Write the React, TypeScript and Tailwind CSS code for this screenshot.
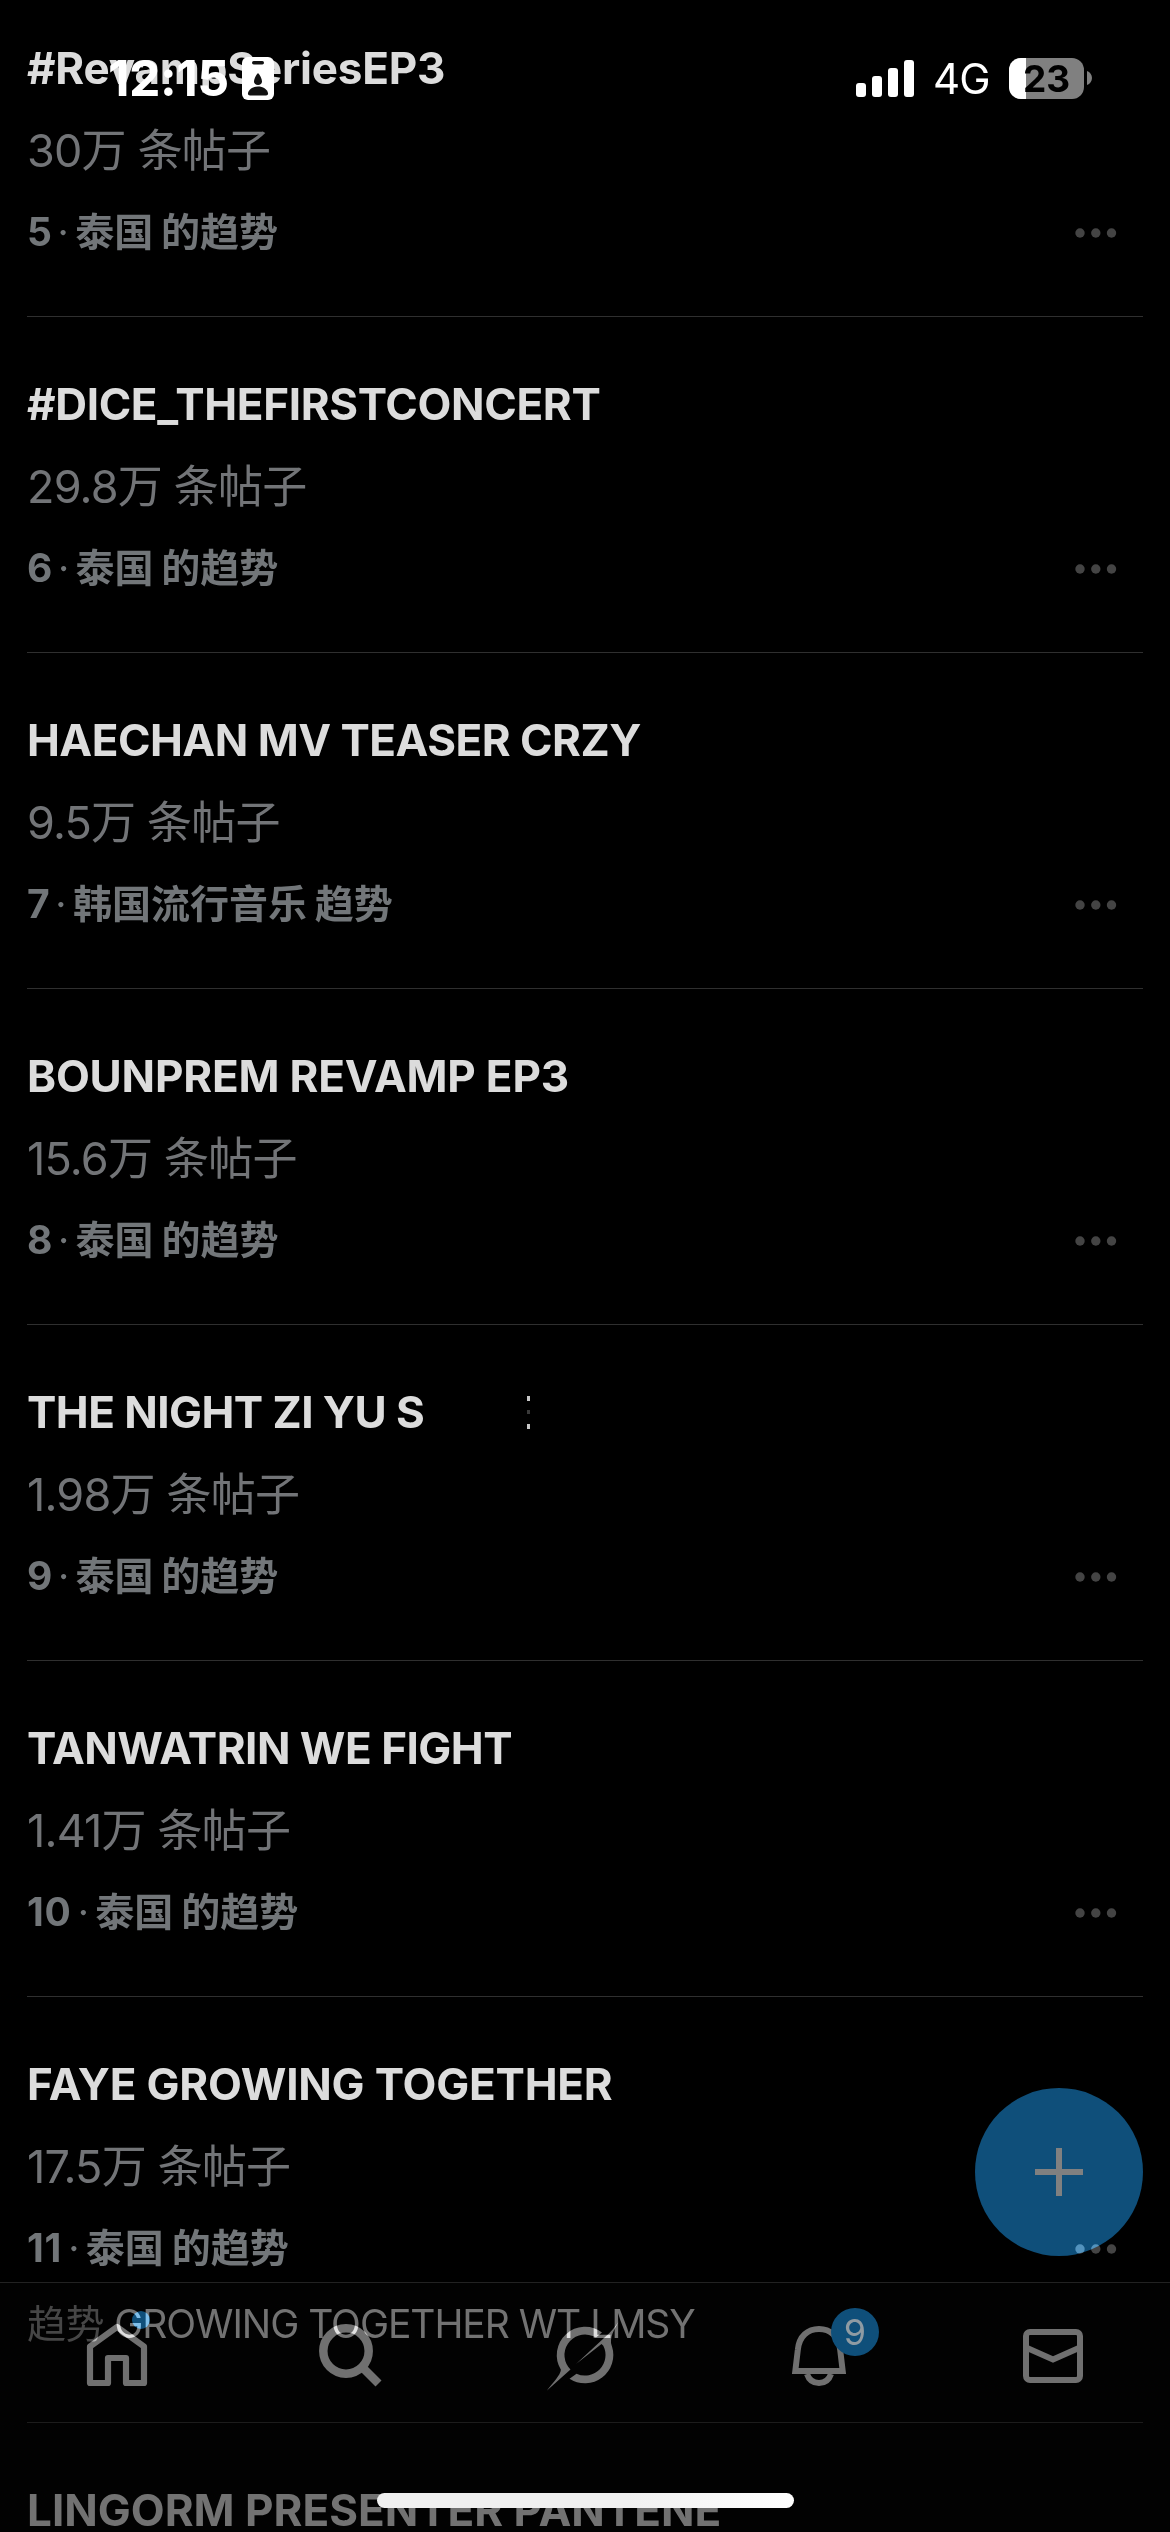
import { clsx } from "clsx";

interface Trend {
  title: string;
  tracking: string;
  posts: string;
  rank: number;
  topic: string;
}

const trends: Trend[] = [
  { title: "#RevampSeriesEP3", tracking: "tracking-[-0.2px]", posts: "30万 条帖子", rank: 5, topic: "泰国 的趋势" },
  { title: "#DICE_THEFIRSTCONCERT", tracking: "tracking-[-0.35px]", posts: "29.8万 条帖子", rank: 6, topic: "泰国 的趋势" },
  { title: "HAECHAN MV TEASER CRZY", tracking: "tracking-[-0.5px]", posts: "9.5万 条帖子", rank: 7, topic: "韩国流行音乐 趋势" },
  { title: "BOUNPREM REVAMP EP3", tracking: "tracking-[-0.2px]", posts: "15.6万 条帖子", rank: 8, topic: "泰国 的趋势" },
  { title: "THE NIGHT ZI YU S", tracking: "tracking-[-0.55px]", posts: "1.98万 条帖子", rank: 9, topic: "泰国 的趋势" },
  { title: "TANWATRIN WE FIGHT", tracking: "tracking-[-0.5px]", posts: "1.41万 条帖子", rank: 10, topic: "泰国 的趋势" },
  { title: "FAYE GROWING TOGETHER", tracking: "tracking-[-0.2px]", posts: "17.5万 条帖子", rank: 11, topic: "泰国 的趋势" },
];

const MoreDots = () => (
  <svg className="mt-[2px] h-[10px] w-[42px]" viewBox="0 0 42 10" fill="#444444">
    <circle cx="5" cy="5" r="4.7" />
    <circle cx="20.800" cy="5" r="4.7" />
    <circle cx="36.500" cy="5" r="4.7" />
  </svg>
);

const TrendRow = ({ trend, last = false }: { trend: Trend; last?: boolean }) => (
  <div
    className={clsx(
      "border-b pt-[61px]",
      last ? "h-[426px] border-[#1a1a1a]" : "h-[336px] border-[#2f2f2f]"
    )}
  >
    <div className="flex h-[52px] items-center">
      <span className={clsx("text-[44px] font-bold text-[#dcdcdc]", trend.tracking)}>{trend.title}</span>
      {trend.rank === 9 && (
        <span className="ml-[103px] flex h-[33px] w-[3px] flex-col justify-between">
          <i className="h-[5px] bg-[#c8c8c8]" />
          <i className="h-[4px] bg-[#3a3a3a]" />
          <i className="h-[5px] bg-[#c8c8c8]" />
        </span>
      )}
    </div>
    <div className="mt-[30px] flex h-[54px] items-center text-[45px] font-normal tracking-[-0.8px] text-[#727477]">
      {trend.posts}
    </div>
    <div className="mt-[27px] flex h-[54px] items-center justify-between pr-[26px] text-[39px] text-[#727679]">
      <div className="flex items-center">
        <span className={clsx("font-bold", trend.rank > 9 ? "tracking-[0.6px]" : "tracking-[-0.8px]")}>
          {trend.rank}
        </span>
        <span className="w-[24px] text-center">·</span>
        <span className="font-semibold [word-spacing:-2px]">{trend.topic}</span>
      </div>
      <MoreDots />
    </div>
    {last && (
      <div className="mt-[22px] flex h-[54px] items-center whitespace-pre text-[39px] text-[#707070]">
        <span className="tracking-[-0.6px] text-[#444444]">趋势 </span>
        <span className="tracking-[-1.05px]">GROWING TOGETHER WT LMSY</span>
      </div>
    )}
  </div>
);

const StatusBar = () => (
  <header className="absolute inset-x-0 top-0 flex h-[150px] items-start justify-between pl-[108px] pr-[78px] pt-[54px]">
    <div className="flex items-center">
      <span className="w-[134px] text-[50px] font-bold leading-[48px] tracking-[-0.5px] text-white">12:15</span>
      <svg className="h-[43px] w-[32px]" viewBox="0 0 32 43">
        <rect width="32" height="43" rx="6" fill="#fff" />
        <rect x="10" y="4" width="12" height="3.500" rx="1.700" fill="#111" />
        <path d="M16 16c2 2 4 6 4 8.500 0 2-1.700 3.500-4 3.500s-4-1.500-4-3.500c0-2.500 2-6.500 4-8.500z" fill="#111" />
        <path d="M6 36c1-4 5-6.500 10-6.500s9 2.500 10 6.500c.3 1.500-.5 2.500-2 2.500H8c-1.500 0-2.300-1-2-2.500z" fill="#111" />
      </svg>
    </div>
    <div className="flex items-center pt-[3px]">
      <svg className="mt-px h-[38px] w-[58px]" viewBox="0 0 58 38" fill="#fff">
        <rect x="0" y="23" width="10" height="14" rx="3" />
        <rect x="16" y="16" width="10" height="21" rx="3" />
        <rect x="32" y="8" width="10" height="29" rx="3" />
        <rect x="48" y="0" width="10" height="37" rx="3" />
      </svg>
      <span className="ml-[19px] mt-[2px] w-[58px] text-[42px] leading-[40px] tracking-[-1px] text-white">4G</span>
      <div className="relative ml-[18px] flex h-[41px] w-[75px] items-center justify-center overflow-hidden rounded-[12px] bg-[#808080]">
        <div className="absolute inset-y-0 left-0 w-[17px] bg-white" />
        <span className="relative text-[37px] font-bold leading-[41px] text-black">23</span>
      </div>
      <svg className="ml-[3px] h-[14px] w-[5px]" viewBox="0 0 5 14">
        <path d="M0 0c3 1 5 4 5 7s-2 6-5 7z" fill="#808080" />
      </svg>
    </div>
  </header>
);

const ComposeButton = () => (
  <button className="absolute left-[975px] top-[2088px] flex size-[168px] items-center justify-center rounded-full bg-[#0f4f7a] mix-blend-plus-lighter">
    <svg className="size-[48px]" viewBox="0 0 48 48">
      <path d="M21 0h6v21h21v6H27v21h-6V27H0v-6h21z" fill="#808080" />
    </svg>
  </button>
);

const TabBar = () => (
  <nav className="absolute inset-x-0 bottom-0 h-[250px] border-t border-[#222222] bg-[#020202] mix-blend-plus-lighter">
    <div className="grid h-[146px] grid-cols-5 place-items-center">
      <div className="relative size-[78px]">
        <svg className="size-full" viewBox="0 0 78 78" fill="none" stroke="#707070" strokeWidth="6.200">
          <path d="M12 66V29.500L39 10l27 19.500V66H48V41H30v25z" strokeLinejoin="round" />
        </svg>
        <div className="absolute left-[54px] top-[-6px] size-[18px] rounded-full bg-[#0f4f7a]" />
      </div>
      <svg className="size-[78px]" viewBox="0 0 78 78" fill="none" stroke="#707070" strokeWidth="8.500">
        <circle cx="34" cy="34" r="22.700" />
        <path d="M50 50l16.500 16.500" />
      </svg>
      <svg className="size-[78px]" viewBox="0 0 78 78" fill="#707070">
        <path d="M56 15.400A28.300 28.300 0 0 0 14.900 52.800C14.500 58 7 66 .7 73.700L24.500 52.500A20.500 20.500 0 0 1 46.700 19L50 20.500z" />
        <path d="M30 47L58 21C64 16 70 9 73 4C70 10 64.500 17 65 26Q65.500 28 66 29.500A28.300 28.300 0 0 1 23.500 61.700L30.500 56.700A20.500 20.500 0 0 0 57.300 28.800L55.500 27z" />
      </svg>
      <div className="relative size-[78px]">
        <svg className="size-full" viewBox="0 0 78 78" fill="none" stroke="#707070" strokeWidth="6">
          <path d="M15.300 54l2.500-21C19 19 28 12 39 12s20 7 21.200 21l2.500 21z" />
          <path d="M27 57c2 6 6 9 12 9s10-3 12-9" />
        </svg>
        <span className="absolute left-[51px] top-[-9px] flex size-[48px] items-center justify-center rounded-full bg-[#0f4f7a] text-[36px] leading-none text-[#8f9ba3]">9</span>
      </div>
      <svg className="size-[78px]" viewBox="0 0 78 78" fill="none" stroke="#707070" strokeWidth="6">
        <rect x="12" y="15" width="54" height="48" rx="4" />
        <path d="M12 30.500l27 12 27-12" />
      </svg>
    </div>
  </nav>
);

export default function App() {
  return (
    <div className="relative isolate h-[2532px] w-[1170px] overflow-hidden bg-black font-['Inter','Noto_Sans_CJK_SC',sans-serif]">
      <main className="mt-[-19px] px-[27px]">
        {trends.map((trend) => (
          <TrendRow key={trend.rank} trend={trend} last={trend.rank === 11} />
        ))}
        <div className="pt-[61px] text-[44px] font-bold leading-[52px] text-[#707070]">
          LINGORM PRESENTER PANTENE
        </div>
      </main>
      <ComposeButton />
      <TabBar />
      <StatusBar />
      <div className="absolute bottom-[24px] left-[377px] h-[15px] w-[417px] rounded-full bg-linear-to-r from-[#f0f0f0] from-60% to-white" />
    </div>
  );
}
